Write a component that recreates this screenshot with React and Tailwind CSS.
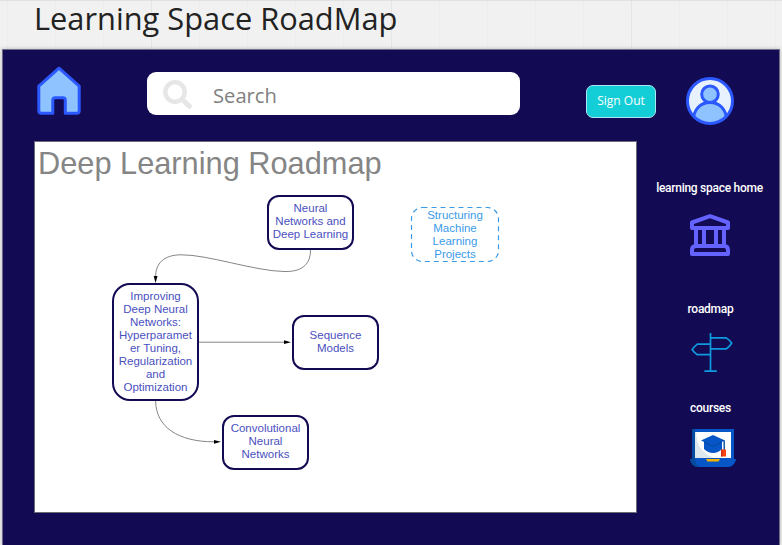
import React from "react";

const arial = "font-['Liberation_Sans',Arial,sans-serif]";
const openSans = "font-['Open_Sans','Noto_Sans',sans-serif]";

function HomeIcon() {
  return (
    <svg className="h-[50px] w-[46px]" viewBox="0 0 46 50" aria-label="Home">
      <path
        d="M23 2.2 L43.2 20.2 V44.7 Q43.2 47.2 40.7 47.2 H29.3 V34.2 Q29.3 31.7 26.8 31.7 H19.3 Q16.8 31.7 16.8 34.2 V47.2 H5.4 Q2.8 47.2 2.8 44.7 V20.2 Z"
        fill="#8fc3ff"
        stroke="#2b59ff"
        strokeWidth="3"
        strokeLinejoin="round"
      />
    </svg>
  );
}

function SearchIcon() {
  return (
    <svg className="mt-[3px] h-[30px] w-[30px]" viewBox="0 0 30 30" fill="none" stroke="#e6e6e6">
      <circle cx="12" cy="12" r="9.7" strokeWidth="4.4" />
      <path d="M20.2 20.2 L28 27.7" strokeWidth="5" />
    </svg>
  );
}

function AvatarIcon() {
  return (
    <svg className="h-[48px] w-[48px]" viewBox="0 0 48 48" aria-label="Profile">
      <defs>
        <clipPath id="avatar-disc">
          <circle cx="24" cy="24" r="22.5" />
        </clipPath>
      </defs>
      <circle cx="24" cy="24" r="22.5" fill="#e8f2ff" />
      <g clipPath="url(#avatar-disc)" fill="#8fc3ff" stroke="#2b59ff" strokeWidth="3">
        <path d="M7.5 43 C7.5 33 14 25.5 24 25.5 C34 25.5 40.5 33 40.5 43 V50 H7.5 Z" />
        <circle cx="24" cy="17.3" r="8.3" />
      </g>
      <circle cx="24" cy="24" r="22.5" fill="none" stroke="#2b59ff" strokeWidth="3" />
    </svg>
  );
}

function MuseumIcon() {
  return (
    <svg className="h-[42px] w-[40px]" viewBox="0 0 40 42" fill="none" stroke="#6563ff" strokeWidth="4" strokeLinejoin="round">
      <path d="M2 8.5 L20 2.2 L38 8.5 V14 H2 Z" />
      <path d="M6 14 V31 M14 14 V31 M26 14 V31 M34 14 V31" />
      <path d="M2 40 V36 Q2 32 6 32 H34 Q38 32 38 36 V40 Z" />
    </svg>
  );
}

function SignpostIcon() {
  return (
    <svg className="h-[40px] w-[42px]" viewBox="0 0 42 40" fill="none" stroke="#0f9ae0" strokeWidth="1.7" strokeLinejoin="round">
      <path d="M19.5 0 V38.2 M13.4 38.2 H25.8" />
      <path d="M19.5 4.9 H35.3 Q38.8 7.2 40.7 10.2 Q38.8 13.2 35.3 15.8 H19.5" />
      <path d="M19.5 11.1 H6.4 Q3 13.6 1 16.6 Q3 19.5 6.4 21.7 H19.5" />
    </svg>
  );
}

function LaptopIcon() {
  return (
    <svg className="h-[38px] w-[46px]" viewBox="0 0 46 38">
      <path d="M2 0 H44 V31 H2 Z" fill="#0656c7" />
      <path d="M2 0 H5 V31 H2 Z" fill="#064a9e" />
      <path d="M5 3 H41 V29 H5 Z" fill="#ffffff" />
      <path d="M5 3 H6.2 C6 14 11 24 24 29 H5 Z" fill="#dce7ee" />
      <path d="M0 30 H46 V31 Q43.5 38 38.5 38 H7.5 Q2.5 38 0 31 Z" fill="#0656c7" />
      <path d="M0 30 H5 Q6 36 10 38 H7.5 Q2.5 38 0 31 Z" fill="#064a9e" />
      <path d="M16 30 H30 L28.5 32.5 H17.5 Z" fill="#f7b500" />
      <path d="M14 12 V20 Q18 24 23 24 Q28 24 32 20 V12 Z" fill="#0656c7" />
      <path d="M11 11.5 L23 6 L35 11.5 L23 17.2 Z" fill="#0656c7" />
      <path d="M14 13 L23 17.3 L32 13" fill="none" stroke="#064a9e" strokeWidth="1" />
      <path d="M34.2 11.5 V21" stroke="#064a9e" strokeWidth="1.4" />
      <path d="M31 20.5 H36 V27.5 H31 Z" fill="#fb4412" />
      <path d="M31 20.5 H32.5 V27.5 H31 Z" fill="#c92f12" />
    </svg>
  );
}

function Node({ place, lines }) {
  return (
    <div className={`absolute flex flex-col items-center text-[11.5px] leading-[13px] whitespace-nowrap ${place}`}>
      {lines.map((line) => (
        <span key={line}>{line}</span>
      ))}
    </div>
  );
}

function Connectors() {
  return (
    <svg className="absolute top-0 left-0 h-[371px] w-[601px]" viewBox="35 142 601 371" fill="none">
      <g stroke="#777777" strokeWidth="0.9">
        <path d="M310.5 250 C310.5 266 300 272 284 271.5 C254 271 208 254.5 181 254.8 C163 255 155.6 264 155.6 277" />
        <path d="M199 342.2 H285" />
        <path d="M155.6 401 C156 427 178 441.8 214 441.8" />
      </g>
      <g fill="#000000">
        <path d="M153.7 276 H157.5 L155.6 283 Z" />
        <path d="M284 340.3 V344.1 L291 342.2 Z" />
        <path d="M214 439.9 V443.7 L221 441.8 Z" />
      </g>
      <rect x="411.5" y="207.5" width="87" height="54" rx="11" stroke="#3a9be8" strokeWidth="1.2" strokeDasharray="5 4" />
    </svg>
  );
}

function Roadmap() {
  const solid = "border-[2.2px] border-[#120a52] text-[#4a50c0]";
  return (
    <main className={`relative h-[372px] w-[603px] shrink-0 border border-[#6d6b76] bg-white ${arial}`}>
      <h2 className="ml-[3px] pt-[4px] text-[30.75px] leading-[36px] whitespace-nowrap text-[#858585]">Deep Learning Roadmap</h2>
      <Connectors />
      <Node
        place={`left-[232px] top-[53px] h-[55px] w-[87px] rounded-[12px] pt-[5px] ${solid}`}
        lines={["Neural", "Networks and", "Deep Learning"]}
      />
      <Node
        place="left-[376px] top-[65px] h-[55px] w-[88px] pt-[2px] text-[#3a9be8]"
        lines={["Structuring", "Machine", "Learning", "Projects"]}
      />
      <Node
        place={`left-[77px] top-[141px] h-[118px] w-[87px] rounded-[18px] pt-[5px] ${solid}`}
        lines={["Improving", "Deep Neural", "Networks:", "Hyperparamet", "er Tuning,", "Regularization", "and", "Optimization"]}
      />
      <Node place={`left-[257px] top-[173px] h-[55px] w-[87px] rounded-[12px] pt-[12px] ${solid}`} lines={["Sequence", "Models"]} />
      <Node
        place={`left-[187px] top-[273px] h-[55px] w-[87px] rounded-[12px] pt-[5px] ${solid}`}
        lines={["Convolutional", "Neural", "Networks"]}
      />
    </main>
  );
}

function Sidebar() {
  const label = "text-[12px] leading-[14px] font-medium tracking-[-0.27px] whitespace-nowrap";
  return (
    <nav className="flex w-[142px] flex-col items-center pt-[40px] pl-[3px] font-['Roboto',sans-serif] text-white">
      <span className={label}>learning space home</span>
      <div className="mt-[19px] ml-[1px]"><MuseumIcon /></div>
      <span className={`mt-[46px] ml-[2px] ${label}`}>roadmap</span>
      <div className="mt-[17px] ml-[4px]"><SignpostIcon /></div>
      <span className={`mt-[28px] ml-[2px] ${label}`}>courses</span>
      <div className="mt-[14px] ml-[7px]"><LaptopIcon /></div>
    </nav>
  );
}

export default function App() {
  return (
    <div className="flex h-[545px] w-[782px] flex-col border-t border-[#e1e1e1] bg-[#f1f1f1] bg-[image:repeating-linear-gradient(90deg,#e5e5e5_0,#e5e5e5_1px,transparent_1px,transparent_240px),repeating-linear-gradient(90deg,#ededed_0,#ededed_1px,transparent_1px,transparent_48px)] bg-[position:-89px_0,7px_0] bg-[size:1200px_100%,960px_100%]">
      <h1 className={`h-[48px] shrink-0 pl-[34px] text-[30.8px] leading-[34px] font-normal whitespace-nowrap text-[#222222] ${openSans}`}>
        Learning Space RoadMap
      </h1>
      <div className="ml-[2px] flex h-[496px] w-[778px] shrink-0 flex-col border border-b-0 border-[#6f6b89] bg-[#120a52] shadow-[0_0_4px_rgba(0,0,0,0.25)]">
        <header className="flex h-[91px] shrink-0 items-start">
          <div className="mt-[16px] ml-[33px]"><HomeIcon /></div>
          <div className="mt-[22px] ml-[65px] flex h-[43px] w-[373px] items-center rounded-[9px] bg-white pl-[16px]">
            <SearchIcon />
            <span className={`ml-[20px] pt-[2px] text-[20.2px] leading-[28px] text-[#808080] ${openSans}`}>Search</span>
          </div>
          <button className={`mt-[35px] ml-[66px] h-[33px] w-[70px] rounded-[7px] border border-[#a9e8ef] bg-[#13ced6] pb-px text-[12px] leading-[16px] whitespace-nowrap text-white ${openSans}`}>
            Sign Out
          </button>
          <div className="mt-[27px] ml-[30px]"><AvatarIcon /></div>
        </header>
        <div className="flex pl-[31px]">
          <Roadmap />
          <Sidebar />
        </div>
      </div>
    </div>
  );
}
